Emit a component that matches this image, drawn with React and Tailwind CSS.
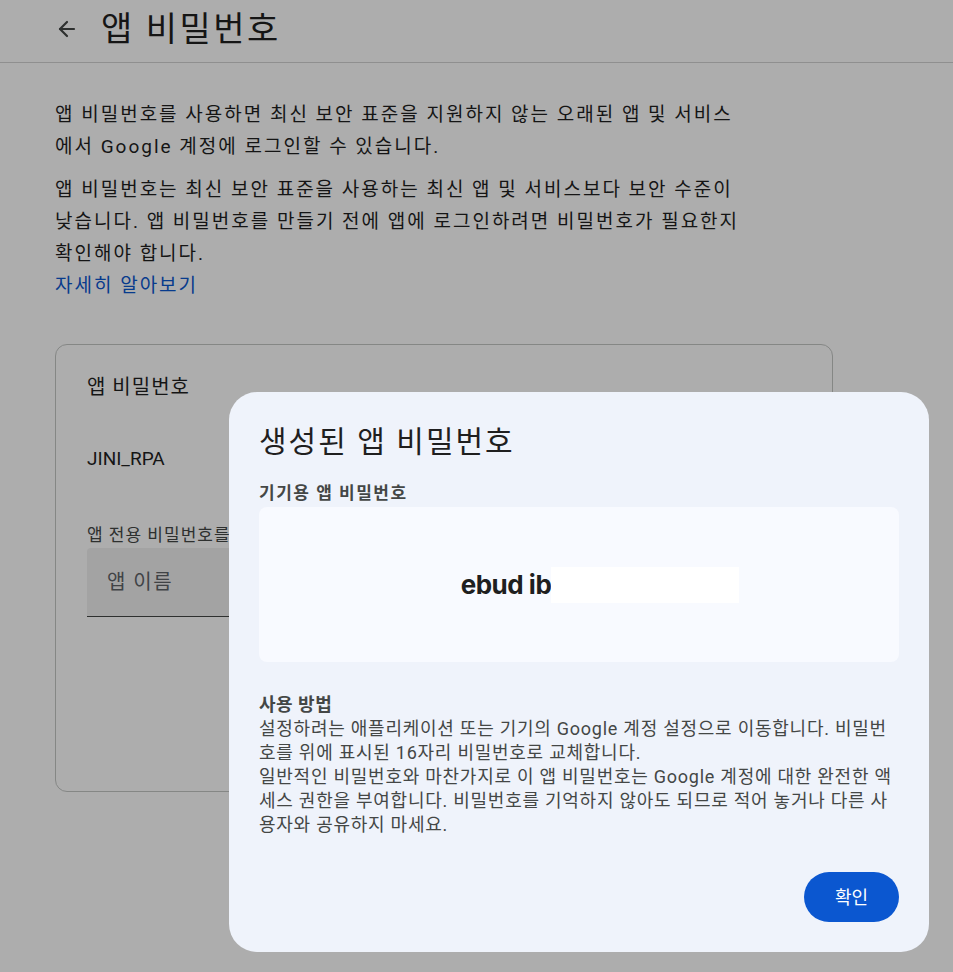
import { ArrowLeft } from "lucide-react";

const font = { fontFamily: "Roboto, 'Noto Sans CJK KR', sans-serif" };

export default function App() {
  return (
    <div className="relative h-[972px] w-full overflow-hidden bg-white text-[#1f1f1f]" style={font}>
      {/* Header */}
      <header className="flex h-[63px] items-center border-b border-[#d3d3d3] pb-1">
        <button className="ml-[51px] flex h-8 w-8 items-center justify-center text-[#444746]">
          <ArrowLeft size={24} strokeWidth={2.2} />
        </button>
        <h1 className="ml-[18px] text-[34px] leading-none tracking-[2.5px]">앱 비밀번호</h1>
      </header>

      {/* Body */}
      <main className="w-[833px] pl-[55px] pt-[36px]">
        <p className="text-[19px] leading-[32px] tracking-[2px]">
          앱 비밀번호를 사용하면 최신 보안 표준을 지원하지 않는 오래된 앱 및 서비스
          <br />
          에서 Google 계정에 로그인할 수 있습니다.
        </p>
        <p className="mt-[11px] text-[19px] leading-[32px] tracking-[2px]">
          앱 비밀번호는 최신 보안 표준을 사용하는 최신 앱 및 서비스보다 보안 수준이
          <br />
          낮습니다. 앱 비밀번호를 만들기 전에 앱에 로그인하려면 비밀번호가 필요한지
          <br />
          확인해야 합니다.
        </p>
        <a className="block text-[19px] leading-[32px] tracking-[2px] text-[#0b57d0]">자세히 알아보기</a>

        <section className="mt-[42px] h-[448px] rounded-xl border border-[#c4c7c5] px-[31px] pt-[28px]">
          <div className="text-[20px] leading-[28px] tracking-[1px]">앱 비밀번호</div>
          <div className="mt-[44px] text-[19px] leading-[28px]">JINI_RPA</div>
          <div className="mt-[51px] text-[17px] leading-[22px] tracking-[1px] text-[#444746]">앱 전용 비밀번호를 만들 앱의 이름을 입력하세요</div>
          <div className="mt-[2px] flex h-[69px] w-[680px] items-center rounded-t border-b border-[#444746] bg-[#f0f0f0] px-[20px] text-[20px] tracking-[1.5px] text-[#5f6368]">
            앱 이름
          </div>
        </section>
      </main>

      {/* Scrim */}
      <div className="absolute inset-0 bg-black/[0.32]" />

      {/* Dialog */}
      <div className="absolute left-[229px] top-[392px] flex h-[560px] w-[700px] flex-col rounded-[28px] bg-[#eff3fb] px-[30px] pt-[30px]">
        <h2 className="text-[30px] leading-[40px] tracking-[2px] text-[#1f1f1f]">생성된 앱 비밀번호</h2>
        <div className="mt-[20px] text-[17px] font-bold leading-[22px] tracking-[1.5px] text-[#444746]">기기용 앱 비밀번호</div>
        <div className="mt-[3px] flex h-[155px] items-center justify-center rounded-lg bg-[#f8faff] pl-[42px]">
          <span className="text-[26px] font-bold tracking-[-0.5px] text-[#1f1f1f]" style={{ fontFamily: "Inter, Roboto, sans-serif" }}>
            ebud ib
          </span>
          <span className="h-[36px] w-[188px] bg-white" />
        </div>
        <div className="mt-[31px] text-[18px] font-bold leading-[24px] tracking-[0.5px] text-[#444746]">사용 방법</div>
        <p className="text-[18px] leading-[24px] tracking-[0.75px] text-[#444746]">
          설정하려는 애플리케이션 또는 기기의 Google 계정 설정으로 이동합니다. 비밀번
          <br />
          호를 위에 표시된 16자리 비밀번호로 교체합니다.
          <br />
          일반적인 비밀번호와 마찬가지로 이 앱 비밀번호는 Google 계정에 대한 완전한 액
          <br />
          세스 권한을 부여합니다. 비밀번호를 기억하지 않아도 되므로 적어 놓거나 다른 사
          <br />
          용자와 공유하지 마세요.
        </p>
        <div className="mt-auto flex justify-end pb-[30px]">
          <button className="h-[50px] w-[95px] rounded-full bg-[#0b57d0] text-[18px] text-white">확인</button>
        </div>
      </div>
    </div>
  );
}
